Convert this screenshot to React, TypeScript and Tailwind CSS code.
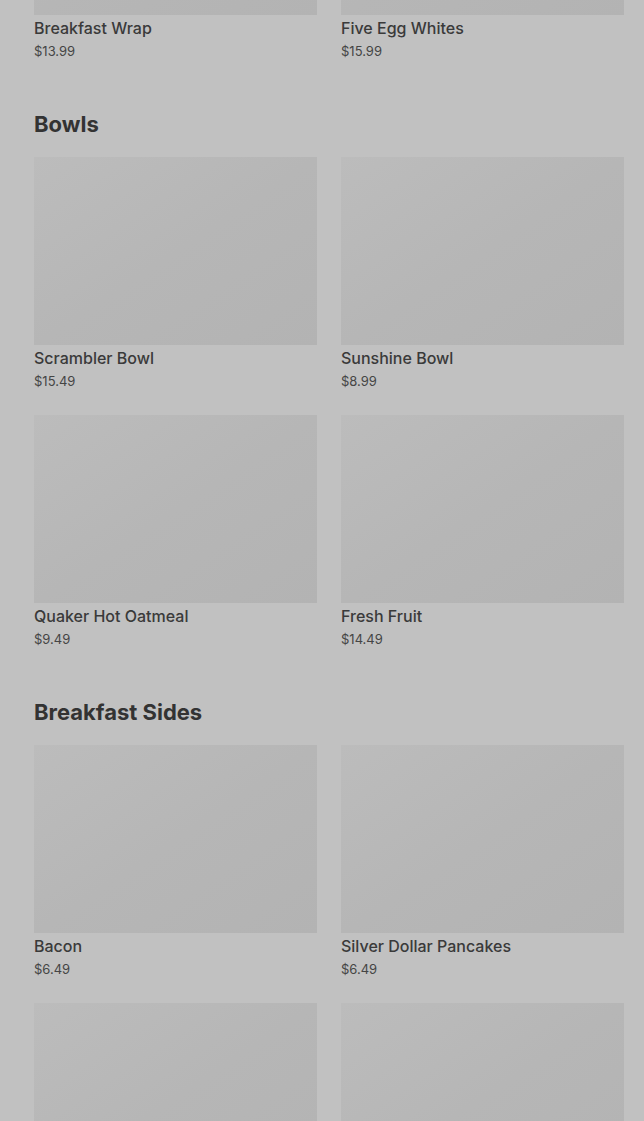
import React from "react";

type Item = { name?: string; price?: string };

const sections: { title: string | null; items: Item[] }[] = [
  {
    title: null,
    items: [
      { name: "Breakfast Wrap", price: "$13.99" },
      { name: "Five Egg Whites", price: "$15.99" },
    ],
  },
  {
    title: "Bowls",
    items: [
      { name: "Scrambler Bowl", price: "$15.49" },
      { name: "Sunshine Bowl", price: "$8.99" },
      { name: "Quaker Hot Oatmeal", price: "$9.49" },
      { name: "Fresh Fruit", price: "$14.49" },
    ],
  },
  {
    title: "Breakfast Sides",
    items: [
      { name: "Bacon", price: "$6.49" },
      { name: "Silver Dollar Pancakes", price: "$6.49" },
      {},
      {},
    ],
  },
];

function Card({ item }: { item: Item }) {
  return (
    <div className="flex flex-col">
      <div className="h-[188px] w-full bg-gradient-to-br from-[#bcbcbc] via-[#b6b6b6] to-[#b3b3b3]" />
      {item.name && (
        <>
          <div className="mt-[3px] text-[16px] leading-[20px] font-medium text-[#3a3a3a]">{item.name}</div>
          <div className="mt-[4px] text-[13px] leading-[18px] text-[#454545]">{item.price}</div>
        </>
      )}
    </div>
  );
}

export default function App() {
  return (
    <div
      className="w-[644px] h-[1121px] overflow-hidden bg-[#c1c1c1]"
      style={{ fontFamily: "Inter, 'Noto Sans', sans-serif" }}
    >
      <div className="mt-[-173px] pl-[34px] pr-[20px] flex flex-col gap-[50px]">
        {sections.map((s, i) => (
          <div key={i} className="flex flex-col">
            {s.title && (
              <h2 className="text-[22px] leading-[28px] font-bold text-[#333333] mb-[19px]">
                {s.title}
              </h2>
            )}
            <div className="grid grid-cols-2 gap-x-[24px] gap-y-[25px]">
              {s.items.map((it, j) => (
                <Card key={j} item={it} />
              ))}
            </div>
          </div>
        ))}
      </div>
    </div>
  );
}
